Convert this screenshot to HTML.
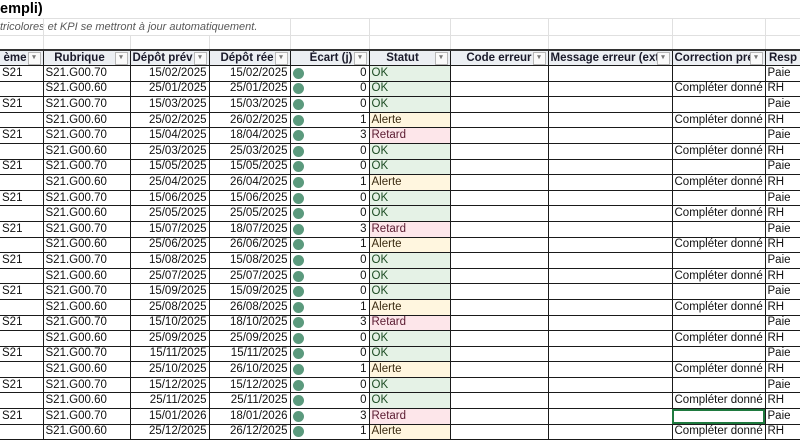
<!DOCTYPE html>
<html><head><meta charset="utf-8"><style>
body{margin:0;width:800px;height:445px;overflow:hidden;background:#fff;font-family:"Liberation Sans",sans-serif;position:relative}
.t{position:absolute;left:0;top:0;font-weight:bold;font-size:14.5px;line-height:18px;color:#000;}
.n{position:absolute;left:0;top:20px;font-style:italic;font-size:11px;color:#595959;line-height:14px}
.grid{position:absolute;top:0;height:49px;width:1px;background:#e0e0e0}
.hl{position:absolute;left:0;width:800px;height:1px;background:#e0e0e0}
table{position:absolute;left:0;top:49px;border-collapse:collapse;table-layout:fixed;font-size:11.5px;width:815px}
td{height:14.6px;padding:0 2px;border:1px solid #1a1a1a;white-space:nowrap;overflow:hidden;line-height:13px;color:#111}
th{height:14px;padding:0 2px;border:1px solid #1a1a1a;border-top:2px solid #333;background:#eceff3;font-weight:bold;white-space:nowrap;overflow:hidden;position:relative;text-align:center;padding-right:16px;line-height:13px;color:#1a1a2a}
th i{position:absolute;right:2px;top:1px;width:11px;height:11px;background:#fafafa;border:1px solid #b8b8b8;font-style:normal;font-size:7px;color:#777;line-height:10px;text-align:center}
.r{text-align:right}
.ok{background:#e5f2e6;color:#1d4d24}
.al{background:#fff6df;color:#3a2a10}
.re{background:#fde6ea;color:#5a1a30}
.d{display:inline-block;width:11px;height:11px;border-radius:50%;background:#5b9a7d;vertical-align:-2px;float:left;margin-top:1px}
.sel{outline:2px solid #1f7a3f;outline-offset:-2px}
</style></head><body>
<div class="t">empli)</div>
<div class="n">tricolores et KPI se mettront à jour automatiquement.</div>
<div class="hl" style="top:18px"></div><div class="hl" style="top:35px"></div>
<div class="grid" style="left:43px;top:18px;height:31px"></div><div class="grid" style="left:130px;top:35px;height:14px"></div><div class="grid" style="left:209px;top:35px;height:14px"></div><div class="grid" style="left:290px;top:18px;height:31px"></div><div class="grid" style="left:369px;top:18px;height:31px"></div><div class="grid" style="left:450px;top:18px;height:31px"></div><div class="grid" style="left:548px;top:18px;height:31px"></div><div class="grid" style="left:672px;top:18px;height:31px"></div><div class="grid" style="left:765px;top:18px;height:31px"></div>
<table>
<colgroup><col style="width:43px"><col style="width:87px"><col style="width:79px"><col style="width:81px"><col style="width:79px"><col style="width:81px"><col style="width:98px"><col style="width:124px"><col style="width:93px"><col style="width:50px"></colgroup>
<tr><th style="text-align:right;border-left:none">ème<i>▾</i></th><th>Rubrique<i>▾</i></th><th class="r">Dépôt prév<i>▾</i></th><th class="r">Dépôt rée<i>▾</i></th><th class="r">Écart (j)<i>▾</i></th><th>Statut<i>▾</i></th><th class="r">Code erreur<i>▾</i></th><th style="text-align:left">Message erreur (extra<i>▾</i></th><th style="text-align:left">Correction prév<i>▾</i></th><th style="text-align:center">Resp</th></tr>
<tr><td style="border-left:none">S21</td><td>S21.G00.70</td><td class="r">15/02/2025</td><td class="r">15/02/2025</td><td class="r"><span class="d"></span>0</td><td class="ok">OK</td><td></td><td></td><td></td><td>Paie</td></tr>
<tr><td style="border-left:none"></td><td>S21.G00.60</td><td class="r">25/01/2025</td><td class="r">25/01/2025</td><td class="r"><span class="d"></span>0</td><td class="ok">OK</td><td></td><td></td><td>Compléter donné</td><td>RH</td></tr>
<tr><td style="border-left:none">S21</td><td>S21.G00.70</td><td class="r">15/03/2025</td><td class="r">15/03/2025</td><td class="r"><span class="d"></span>0</td><td class="ok">OK</td><td></td><td></td><td></td><td>Paie</td></tr>
<tr><td style="border-left:none"></td><td>S21.G00.60</td><td class="r">25/02/2025</td><td class="r">26/02/2025</td><td class="r"><span class="d"></span>1</td><td class="al">Alerte</td><td></td><td></td><td>Compléter donné</td><td>RH</td></tr>
<tr><td style="border-left:none">S21</td><td>S21.G00.70</td><td class="r">15/04/2025</td><td class="r">18/04/2025</td><td class="r"><span class="d"></span>3</td><td class="re">Retard</td><td></td><td></td><td></td><td>Paie</td></tr>
<tr><td style="border-left:none"></td><td>S21.G00.60</td><td class="r">25/03/2025</td><td class="r">25/03/2025</td><td class="r"><span class="d"></span>0</td><td class="ok">OK</td><td></td><td></td><td>Compléter donné</td><td>RH</td></tr>
<tr><td style="border-left:none">S21</td><td>S21.G00.70</td><td class="r">15/05/2025</td><td class="r">15/05/2025</td><td class="r"><span class="d"></span>0</td><td class="ok">OK</td><td></td><td></td><td></td><td>Paie</td></tr>
<tr><td style="border-left:none"></td><td>S21.G00.60</td><td class="r">25/04/2025</td><td class="r">26/04/2025</td><td class="r"><span class="d"></span>1</td><td class="al">Alerte</td><td></td><td></td><td>Compléter donné</td><td>RH</td></tr>
<tr><td style="border-left:none">S21</td><td>S21.G00.70</td><td class="r">15/06/2025</td><td class="r">15/06/2025</td><td class="r"><span class="d"></span>0</td><td class="ok">OK</td><td></td><td></td><td></td><td>Paie</td></tr>
<tr><td style="border-left:none"></td><td>S21.G00.60</td><td class="r">25/05/2025</td><td class="r">25/05/2025</td><td class="r"><span class="d"></span>0</td><td class="ok">OK</td><td></td><td></td><td>Compléter donné</td><td>RH</td></tr>
<tr><td style="border-left:none">S21</td><td>S21.G00.70</td><td class="r">15/07/2025</td><td class="r">18/07/2025</td><td class="r"><span class="d"></span>3</td><td class="re">Retard</td><td></td><td></td><td></td><td>Paie</td></tr>
<tr><td style="border-left:none"></td><td>S21.G00.60</td><td class="r">25/06/2025</td><td class="r">26/06/2025</td><td class="r"><span class="d"></span>1</td><td class="al">Alerte</td><td></td><td></td><td>Compléter donné</td><td>RH</td></tr>
<tr><td style="border-left:none">S21</td><td>S21.G00.70</td><td class="r">15/08/2025</td><td class="r">15/08/2025</td><td class="r"><span class="d"></span>0</td><td class="ok">OK</td><td></td><td></td><td></td><td>Paie</td></tr>
<tr><td style="border-left:none"></td><td>S21.G00.60</td><td class="r">25/07/2025</td><td class="r">25/07/2025</td><td class="r"><span class="d"></span>0</td><td class="ok">OK</td><td></td><td></td><td>Compléter donné</td><td>RH</td></tr>
<tr><td style="border-left:none">S21</td><td>S21.G00.70</td><td class="r">15/09/2025</td><td class="r">15/09/2025</td><td class="r"><span class="d"></span>0</td><td class="ok">OK</td><td></td><td></td><td></td><td>Paie</td></tr>
<tr><td style="border-left:none"></td><td>S21.G00.60</td><td class="r">25/08/2025</td><td class="r">26/08/2025</td><td class="r"><span class="d"></span>1</td><td class="al">Alerte</td><td></td><td></td><td>Compléter donné</td><td>RH</td></tr>
<tr><td style="border-left:none">S21</td><td>S21.G00.70</td><td class="r">15/10/2025</td><td class="r">18/10/2025</td><td class="r"><span class="d"></span>3</td><td class="re">Retard</td><td></td><td></td><td></td><td>Paie</td></tr>
<tr><td style="border-left:none"></td><td>S21.G00.60</td><td class="r">25/09/2025</td><td class="r">25/09/2025</td><td class="r"><span class="d"></span>0</td><td class="ok">OK</td><td></td><td></td><td>Compléter donné</td><td>RH</td></tr>
<tr><td style="border-left:none">S21</td><td>S21.G00.70</td><td class="r">15/11/2025</td><td class="r">15/11/2025</td><td class="r"><span class="d"></span>0</td><td class="ok">OK</td><td></td><td></td><td></td><td>Paie</td></tr>
<tr><td style="border-left:none"></td><td>S21.G00.60</td><td class="r">25/10/2025</td><td class="r">26/10/2025</td><td class="r"><span class="d"></span>1</td><td class="al">Alerte</td><td></td><td></td><td>Compléter donné</td><td>RH</td></tr>
<tr><td style="border-left:none">S21</td><td>S21.G00.70</td><td class="r">15/12/2025</td><td class="r">15/12/2025</td><td class="r"><span class="d"></span>0</td><td class="ok">OK</td><td></td><td></td><td></td><td>Paie</td></tr>
<tr><td style="border-left:none"></td><td>S21.G00.60</td><td class="r">25/11/2025</td><td class="r">25/11/2025</td><td class="r"><span class="d"></span>0</td><td class="ok">OK</td><td></td><td></td><td>Compléter donné</td><td>RH</td></tr>
<tr><td style="border-left:none">S21</td><td>S21.G00.70</td><td class="r">15/01/2026</td><td class="r">18/01/2026</td><td class="r"><span class="d"></span>3</td><td class="re">Retard</td><td></td><td></td><td class="sel"></td><td>Paie</td></tr>
<tr><td style="border-left:none"></td><td>S21.G00.60</td><td class="r">25/12/2025</td><td class="r">26/12/2025</td><td class="r"><span class="d"></span>1</td><td class="al">Alerte</td><td></td><td></td><td>Compléter donné</td><td>RH</td></tr>
</table>
</body></html>
